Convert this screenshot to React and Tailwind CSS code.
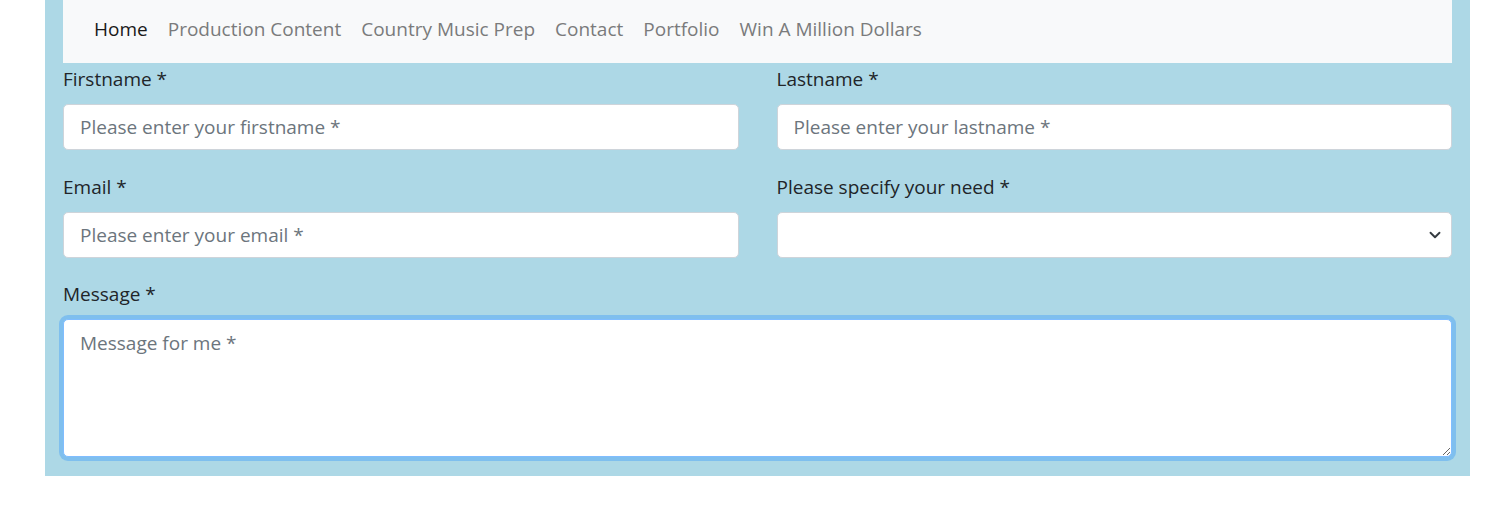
import { ChevronDown } from 'lucide-react'

export default function App() {
  const labelClass = "block mb-[10px] text-[19px] leading-[29px] text-[#212529]"
  const inputClass = "w-full h-[46px] bg-white border border-[#ced4da] rounded-[5px] px-[16px] text-[19px] text-[#212529] placeholder-[#6c757d] focus:outline-none"

  return (
    <div className="min-h-[509px] bg-white" style={{ fontFamily: '"Open Sans", "Noto Sans", sans-serif' }}>
      <div className="ml-[45px] w-[1425px] bg-[#add8e6] px-[18px] pb-[19px]">
        <nav className="h-[63px] bg-[#f8f9fa] flex items-center pl-[21px] pb-[5px] text-[19px]">
          <a className="px-[10px] text-[#1a1a1a]">Home</a>
          <a className="px-[10px] text-[#7a7b7c]">Production Content</a>
          <a className="px-[10px] text-[#7a7b7c]">Country Music Prep</a>
          <a className="px-[10px] text-[#7a7b7c]">Contact</a>
          <a className="px-[10px] text-[#7a7b7c]">Portfolio</a>
          <a className="px-[10px] text-[#7a7b7c]">Win A Million Dollars</a>
        </nav>

        <form className="pt-[2px]">
          <div className="grid grid-cols-2 gap-x-[38px]">
            <div className="mb-[23px]">
              <label className={labelClass}>Firstname *</label>
              <input type="text" placeholder="Please enter your firstname *" className={inputClass} />
            </div>
            <div className="mb-[23px]">
              <label className={labelClass}>Lastname *</label>
              <input type="text" placeholder="Please enter your lastname *" className={inputClass} />
            </div>
            <div className="mb-[22px]">
              <label className={labelClass}>Email *</label>
              <input type="email" placeholder="Please enter your email *" className={inputClass} />
            </div>
            <div className="mb-[22px]">
              <label className={labelClass}>Please specify your need *</label>
              <div className="relative">
                <select className={`${inputClass} appearance-none`} defaultValue="">
                  <option value=""></option>
                  <option>Request quotation</option>
                  <option>Request order status</option>
                  <option>Other</option>
                </select>
                <ChevronDown size={18} strokeWidth={2.5} className="absolute right-[8px] top-[14px] text-[#343a40] pointer-events-none" />
              </div>
            </div>
          </div>

          <div>
            <label className={labelClass}>Message *</label>
            <textarea
              rows={4}
              placeholder="Message for me *"
              className="block w-full h-[138px] bg-white border border-[#80bdff] rounded-[5px] px-[16px] py-[9px] text-[19px] leading-[29px] text-[#212529] placeholder-[#6c757d] outline-none ring-4 ring-[#7fbfee]"
            />
          </div>
        </form>
      </div>
    </div>
  )
}
